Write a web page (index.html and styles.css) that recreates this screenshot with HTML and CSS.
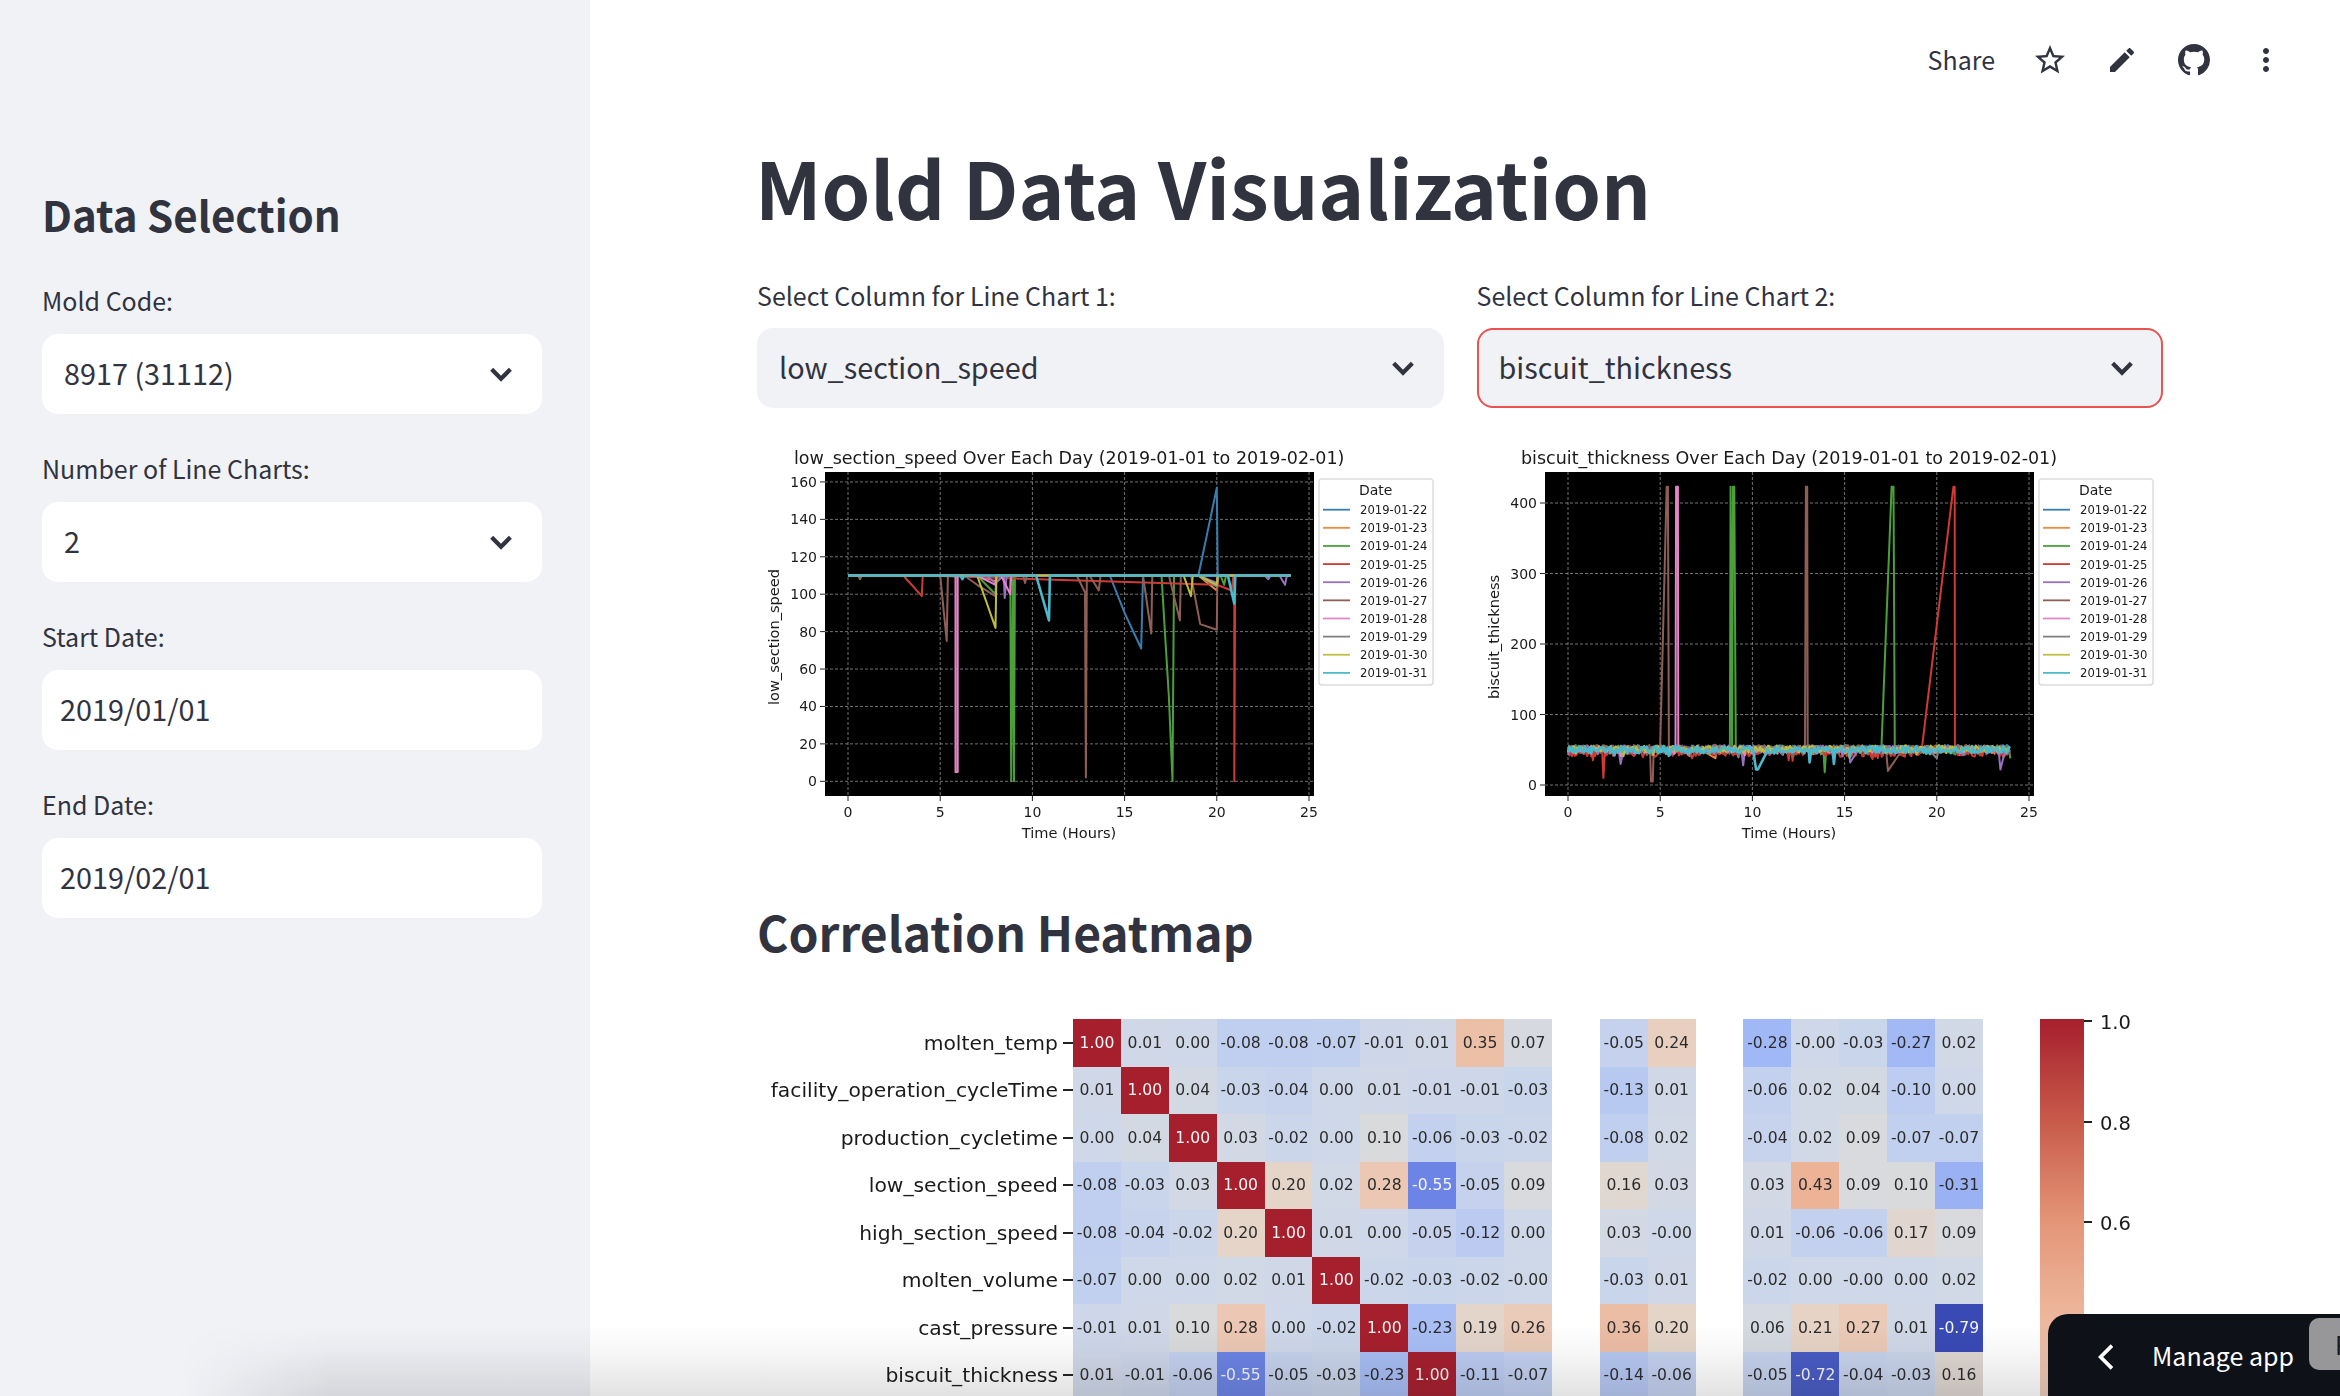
FILE: index.html
```html
<!DOCTYPE html>
<html lang="en">
<head>
<meta charset="utf-8">
<title>Mold Data Visualization</title>
<link rel="stylesheet" href="styles.css">
</head>
<body>
<div class="app">
  <aside class="sidebar">
    <h2 class="side-title">Data Selection</h2>
    <div class="field">
      <label class="label">Mold Code:</label>
      <div class="select white"><span>8917 (31112)</span><svg class="chev" viewBox="0 0 24 24"><path d="M5 8.5l7 7 7-7"/></svg></div>
    </div>
    <div class="field">
      <label class="label">Number of Line Charts:</label>
      <div class="select white"><span>2</span><svg class="chev" viewBox="0 0 24 24"><path d="M5 8.5l7 7 7-7"/></svg></div>
    </div>
    <div class="field">
      <label class="label">Start Date:</label>
      <div class="select white date"><span>2019/01/01</span></div>
    </div>
    <div class="field">
      <label class="label">End Date:</label>
      <div class="select white date"><span>2019/02/01</span></div>
    </div>
  </aside>
  <main class="main">
    <header class="toolbar">
      <span class="share">Share</span>
      <span class="tool"><svg class="ic star" viewBox="0 0 24 24"><path d="M22 9.24l-7.19-.62L12 2 9.19 8.63 2 9.24l5.46 4.73L5.82 21 12 17.27 18.18 21l-1.63-7.03L22 9.24zM12 15.4l-3.76 2.27 1-4.28-3.32-2.88 4.38-.38L12 6.1l1.71 4.04 4.38.38-3.32 2.88 1 4.28L12 15.4z"/></svg></span>
      <span class="tool"><svg class="ic" viewBox="0 0 24 24"><path d="M3 17.25V21h3.75L17.81 9.94l-3.75-3.75L3 17.25zM20.71 7.04c.39-.39.39-1.02 0-1.41l-2.34-2.34c-.39-.39-1.02-.39-1.41 0l-1.83 1.83 3.75 3.75 1.83-1.83z"/></svg></span>
      <span class="tool"><svg class="ic" viewBox="0 0 16 16"><path d="M8 0C3.58 0 0 3.58 0 8c0 3.54 2.29 6.53 5.47 7.59.4.07.55-.17.55-.38 0-.19-.01-.82-.01-1.49-2.01.37-2.53-.49-2.69-.94-.09-.23-.48-.94-.82-1.13-.28-.15-.68-.52-.01-.53.63-.01 1.08.58 1.23.82.72 1.21 1.87.87 2.33.66.07-.52.28-.87.51-1.07-1.78-.2-3.64-.89-3.64-3.95 0-.87.31-1.59.82-2.15-.08-.2-.36-1.02.08-2.12 0 0 .67-.21 2.2.82.64-.18 1.32-.27 2-.27s1.36.09 2 .27c1.53-1.04 2.2-.82 2.2-.82.44 1.1.16 1.92.08 2.12.51.56.82 1.27.82 2.15 0 3.07-1.87 3.75-3.65 3.95.29.25.54.73.54 1.48 0 1.07-.01 1.93-.01 2.2 0 .21.15.46.55.38A8.013 8.013 0 0016 8c0-4.42-3.58-8-8-8z"/></svg></span>
      <span class="tool"><svg class="ic star" viewBox="0 0 24 24"><path d="M12 8c1.1 0 2-.9 2-2s-.9-2-2-2-2 .9-2 2 .9 2 2 2zm0 2c-1.1 0-2 .9-2 2s.9 2 2 2 2-.9 2-2-.9-2-2-2zm0 6c-1.1 0-2 .9-2 2s.9 2 2 2 2-.9 2-2-.9-2-2-2z"/></svg></span>
    </header>
    <h1 class="title">Mold Data Visualization</h1>
    <section class="cols">
      <div class="col">
        <label class="label">Select Column for Line Chart 1:</label>
        <div class="select gray"><span>low_section_speed</span><svg class="chev" viewBox="0 0 24 24"><path d="M5 8.5l7 7 7-7"/></svg></div>
        <div class="chart" id="chart1"></div>
      </div>
      <div class="col">
        <label class="label">Select Column for Line Chart 2:</label>
        <div class="select gray focus"><span>biscuit_thickness</span><svg class="chev" viewBox="0 0 24 24"><path d="M5 8.5l7 7 7-7"/></svg></div>
        <div class="chart" id="chart2"></div>
      </div>
    </section>
    <h2 class="heading">Correlation Heatmap</h2>
    <section class="heatmap">
      <div class="hm-grid" id="hm"></div>
      <div class="colorbar">
        <div class="cb-bar"></div>
        <div class="cb-ticks">
          <div class="cb-tick"><span>1.0</span></div>
          <div class="cb-tick"><span>0.8</span></div>
          <div class="cb-tick"><span>0.6</span></div>
        </div>
      </div>
    </section>
  </main>
</div>
<div class="fade"></div>
<div class="manage">
  <svg class="manage-chev" viewBox="0 0 24 24"><path d="M15.5 4l-8 8 8 8"/></svg>
  <span class="manage-text">Manage app</span>
  <span class="manage-btn">R</span>
</div>
<script src="app.js"></script>
</body>
</html>
```
FILE: styles.css
```css
* { box-sizing: border-box; }
html, body { margin: 0; height: 1396px; overflow: hidden; background: #fff; }
body { font-family: "Noto Sans CJK SC", "Source Sans Pro", sans-serif; color: #31333f; position: relative; }
.app { display: flex; height: 1396px; overflow: hidden; }

.sidebar { width: 590px; flex: none; background: #f0f2f6; padding: 184px 48px 0 42px; }
.side-title { margin: 0 0 38px; font-size: 42px; line-height: 60px; font-weight: 700; }
.field { margin-bottom: 32px; height: 136px; }
.label { display: block; font-size: 25px; line-height: 36px; height: 36px; margin-bottom: 16px; }
.select { display: flex; align-items: center; justify-content: space-between; height: 80px; border-radius: 16px; padding: 0 22px; font-size: 28.8px; }
.select span { padding-bottom: 3px; }
.white { background: #fff; }
.gray { background: #f0f2f6; }
.date { padding-left: 18px; }
.focus { border: 2px solid #e9524f; padding: 0 20px; }
.chev { width: 32px; height: 32px; fill: none; stroke: #31333f; stroke-width: 3.2; margin-right: 3px; }

.main { flex: 1; padding: 0 177px 0 167px; min-width: 0; }
.toolbar { display: flex; justify-content: flex-end; align-items: center; height: 120px; margin-right: -139px; }
.share { font-size: 25px; line-height: 34px; margin: 0 19px 2px 0; }
.tool { width: 72px; display: flex; justify-content: center; align-items: center; }
.ic { width: 32px; height: 32px; fill: #31333f; }
.ic.star { width: 36px; height: 36px; }
.title { margin: 11px 0 0 -2px; font-size: 78px; line-height: 110px; font-weight: 700; height: 110px; }

.cols { display: flex; gap: 33px; margin-top: 36px; }
.col { flex: 1; min-width: 0; }
.col .label { height: 40px; line-height: 37px; margin-bottom: 11px; }
.chart { margin-top: 32px; height: 410px; }
.chart svg { display: block; filter: blur(.45px); }
.chart text { font-family: "DejaVu Sans", sans-serif; fill: #1a1a1a; }
.t-title { font-size: 17.5px; }
.t-tick { font-size: 14px; }
.t-axis { font-size: 14.6px; }
.t-leg { font-size: 11.6px; }
.t-legh { font-size: 14px; }
.grid { stroke: #9a9a9a; stroke-width: 1; stroke-dasharray: 3 2; opacity: .75; }
.tk { stroke: #222; stroke-width: 1; }
.leg-box { fill: #fff; stroke: #ddd; stroke-width: 1.5; }
.ser { fill: none; stroke-width: 2; stroke-linejoin: round; }
.ser:last-of-type { stroke-width: 2.6; }

.heading { margin: 43px 0 0; font-size: 48px; line-height: 76px; height: 76px; font-weight: 700; }
.heatmap { display: flex; margin-top: 50px; align-items: flex-start; filter: blur(.45px); }
.hm-grid { display: grid; grid-template-columns: 316px repeat(19, 47.9px); grid-auto-rows: 47.5px; flex: none; }
.hm-label { font-family: "DejaVu Sans", sans-serif; font-size: 20.3px; color: #1a1a1a; display: flex; align-items: center; justify-content: flex-end; gap: 4px; white-space: nowrap; }
.hm-label::after { content: ""; width: 10px; height: 2px; background: #222; margin-left: 1px; }
.cell { font-family: "DejaVu Sans", sans-serif; font-size: 15.6px; color: #2b2b2b; display: flex; align-items: center; justify-content: center; white-space: nowrap; overflow: visible; }
.cell.inv { color: #f5f5f5; }
.colorbar { display: flex; margin-left: 57px; flex: none; }
.cb-bar { width: 44px; height: 901px; background: linear-gradient(to bottom, #a61f2d 0%, #c85a4a 11.2%, #e49578 22.4%, #ecb498 32%, #ecc8b4 40.2%, #e5d5c9 44.7%, #d9dadc 50.3%, #cfd8e8 55.9%, #c0cff0 60.3%, #a0b8f5 71.5%, #6b84e5 86.6%, #3a4ab5 100%); }
.cb-ticks { display: flex; flex-direction: column; padding-top: 1px; }
.cb-tick { height: 100.7px; display: flex; align-items: flex-start; font-family: "DejaVu Sans", sans-serif; font-size: 19.5px; color: #1a1a1a; line-height: 24px; }
.cb-tick::before { content: ""; width: 8px; height: 2px; background: #222; margin-right: 8px; }
.cb-tick span { margin-top: -9px; }

.fade { position: absolute; left: 180px; right: 0; bottom: 0; height: 72px; background: linear-gradient(to top, rgba(30,30,40,.13), rgba(30,30,40,.03) 65%, rgba(30,30,40,0)); -webkit-mask-image: linear-gradient(to right, transparent, #000 150px); mask-image: linear-gradient(to right, transparent, #000 150px); pointer-events: none; }
.manage { position: absolute; left: 2048px; right: 0; bottom: 0; height: 82px; background: #0e1117; border-top-left-radius: 20px; color: #fff; overflow: hidden; }
.manage-chev { position: absolute; left: 42px; top: 26px; width: 34px; height: 34px; fill: none; stroke: #fff; stroke-width: 2.6; }
.manage-text { position: absolute; left: 104px; top: 23px; font-size: 25px; line-height: 36px; white-space: nowrap; }
.manage-btn { position: absolute; left: 261px; top: 4px; width: 80px; height: 52px; border-radius: 10px; background: #97979a; color: #1b1b1f; font-size: 25px; line-height: 52px; padding-left: 26px; }
```
FILE: app.js
```js
var COLORS = ['#377eb0', '#f08a3c', '#4ca03c', '#d03a34', '#9a70c0', '#8f5f55', '#e584c8', '#808080', '#bfbf3f', '#4cb8cc'];
var DATES = ['2019-01-22','2019-01-23','2019-01-24','2019-01-25','2019-01-26','2019-01-27','2019-01-28','2019-01-29','2019-01-30','2019-01-31'];
var OX = 757, OY = 440;

function axes(o) {
  var s = '';
  var L = o.left - OX, R = L + 489, T = 472 - OY, B = 796 - OY;
  var xp = function (h) { return (848 + (o.left - 825) + h * 18.44) - OX; };
  var yp = function (v) { return (o.y0 - OY) - v * o.k; };
  s += '<text class="t-title" x="' + (L + o.titleX) + '" y="' + (464 - OY) + '">' + o.name + ' Over Each Day (2019-01-01 to 2019-02-01)</text>';
  s += '<rect x="' + L + '" y="' + T + '" width="489" height="' + (B - T) + '" fill="#000"/>';
  [0, 5, 10, 15, 20, 25].forEach(function (h) {
    var x = xp(h);
    s += '<line class="grid" x1="' + x + '" x2="' + x + '" y1="' + T + '" y2="' + B + '"/>';
    s += '<line class="tk" x1="' + x + '" x2="' + x + '" y1="' + B + '" y2="' + (B + 5) + '"/>';
    s += '<text class="t-tick" text-anchor="middle" x="' + x + '" y="' + (B + 21) + '">' + h + '</text>';
  });
  o.yt.forEach(function (v) {
    var y = yp(v);
    s += '<line class="grid" x1="' + L + '" x2="' + R + '" y1="' + y + '" y2="' + y + '"/>';
    s += '<line class="tk" x1="' + (L - 5) + '" x2="' + L + '" y1="' + y + '" y2="' + y + '"/>';
    s += '<text class="t-tick" text-anchor="end" x="' + (L - 8) + '" y="' + (y + 5) + '">' + v + '</text>';
  });
  o.series.forEach(function (pts, i) {
    var p = pts.map(function (q) { return xp(q[0]).toFixed(1) + ',' + yp(q[1]).toFixed(1); }).join(' ');
    s += '<polyline class="ser" stroke="' + COLORS[i] + '" points="' + p + '"/>';
  });
  var xc = L + 244, yc = (B + T) / 2 + 3;
  s += '<text class="t-axis" text-anchor="middle" x="' + xc + '" y="' + (B + 42) + '">Time (Hours)</text>';
  s += '<text class="t-axis" text-anchor="middle" transform="translate(' + (L - 46) + ',' + yc + ') rotate(-90)">' + o.name + '</text>';
  var lx = R + 5;
  s += '<rect class="leg-box" x="' + lx + '" y="' + (479 - OY) + '" width="114" height="206" rx="3"/>';
  s += '<text class="t-legh" x="' + (lx + 40) + '" y="' + (495 - OY) + '">Date</text>';
  DATES.forEach(function (d, i) {
    var y = 509.7 + i * 18.13 - OY;
    s += '<line stroke="' + COLORS[i] + '" stroke-width="1.8" x1="' + (lx + 4) + '" x2="' + (lx + 31) + '" y1="' + y + '" y2="' + y + '"/>';
    s += '<text class="t-leg" x="' + (lx + 41) + '" y="' + (y + 4.5) + '">' + d + '</text>';
  });
  return '<svg width="686" height="410" viewBox="0 0 686 410">' + s + '</svg>';
}

function base(segs, lv) {
  lv = lv || 110;
  var out = [[0, lv]];
  segs.forEach(function (g) { g.forEach(function (p) { out.push(p); }); });
  out.push([24, lv]);
  return out;
}

var s1 = [
  base([[[14.2,110],[15,90],[15.9,71],[16,110]], [[19,110],[20,157],[20.05,110]]]),
  base([[[7,110],[8,107],[8.05,110]], [[19,110],[20,102],[20.1,110]]]),
  base([[[7,110],[8,100],[8.05,110]], [[8.8,110],[8.85,0],[8.95,110],[9,0],[9.05,110]], [[17,110],[17.4,45],[17.6,0],[17.68,110]], [[20.2,110],[20.4,105],[20.5,110]]]),
  base([[[3,110],[4,99],[4.05,110]], [[20,105],[20.8,102],[20.9,110],[20.95,110],[20.95,0],[21,110]]]),
  base([[[7.5,110],[8,106]], [[8.45,110],[8.5,98],[8.6,110]], [[19,110],[20,106],[20.05,110]], [[22.6,110],[22.8,108],[22.9,110]], [[23.4,110],[23.7,105],[23.8,110]]]),
  base([[[0.55,110],[0.65,108],[0.75,110]], [[5,110],[5.35,75],[5.42,110]], [[6.3,110],[7,105],[8,99],[8.05,110]], [[9.5,110],[9.6,106],[9.7,110]], [[12.4,110],[12.85,101],[12.9,2],[12.95,110]], [[13.1,110],[13.6,102],[13.7,110]], [[16,110],[16.45,79],[16.5,110]], [[17.4,110],[18,86],[18.05,110]], [[18.6,110],[19.1,84],[20,81],[20.03,110]]]),
  base([[[5.83,110],[5.83,5],[5.95,5],[5.95,110]], [[7,110],[8,105],[8.05,110]], [[8.3,110],[8.8,100],[8.85,110]]]),
  base([[[19,110],[20,104],[20.05,110]]]),
  base([[[7,110],[8,82],[8.05,110]], [[18.2,110],[18.6,99],[18.7,110]], [[19,110],[20,105],[20.05,110]]]),
  base([[[6.1,110],[6.2,108],[6.3,110]], [[10.2,110],[10.9,86],[10.95,110]], [[20.6,110],[20.95,95],[21,110]]])
];

function band(seed, lo, hi, dips) {
  var r = seed, out = [];
  function rnd() { r = (r * 9301 + 49297) % 233280; return r / 233280; }
  var evs = dips.slice();
  var h = 0, i = 0;
  evs.sort(function (a, b) { return a[0] - b[0]; });
  while (h < 24) {
    while (i < evs.length && evs[i][0] <= h) { evs[i].slice(1).forEach(function (p) { out.push(p); }); h = Math.max(h, out[out.length - 1][0] + .03); i++; }
    var v = lo + rnd() * (hi - lo);
    if (rnd() < .05) v -= rnd() * 9;
    out.push([h, v]);
    h += .07;
  }
  return out;
}
var s2 = [
  band(11, 48, 57, []),
  band(23, 44, 55, [[7.4, [7.4, 47], [8, 38], [8.05, 50]]]),
  band(37, 44, 56, [[8.78, [8.78, 50], [8.82, 423], [8.9, 50], [8.95, 423], [9.02, 423], [9.1, 50]], [13.85, [13.85, 50], [13.92, 18], [14, 50]], [17, [17, 55], [17.55, 423], [17.65, 423], [17.72, 50]]]),
  band(41, 40, 52, [[1.85, [1.85, 50], [1.92, 10], [2, 48]], [1.3, [1.3, 48], [1.35, 35], [1.45, 48]], [19.2, [19.2, 53], [20.9, 423], [20.97, 423], [20.98, 50]]]),
  band(53, 46, 56, [[2.75, [2.75, 50], [2.85, 30], [3, 48]], [9.4, [9.4, 50], [9.5, 28], [9.6, 50]], [15.25, [15.25, 50], [15.3, 32], [15.7, 48]], [23.35, [23.35, 50], [23.45, 22], [23.7, 48]]]),
  band(67, 46, 57, [[4.45, [4.45, 50], [4.5, 5], [4.6, 5], [4.65, 50]], [5, [5, 55], [5.35, 423], [5.42, 423], [5.47, 50]], [12.85, [12.85, 50], [12.9, 423], [12.97, 423], [13, 50]], [17.25, [17.25, 50], [17.35, 20], [18, 45]]]),
  band(79, 46, 54, [[5.83, [5.83, 50], [5.86, 423], [5.96, 423], [5.98, 50]]]),
  band(83, 47, 56, [[19.5, [19.5, 52], [20, 38], [20.1, 50]]]),
  band(97, 46, 56, []),
  band(101, 45, 55, [[10.05, [10.05, 48], [10.2, 22], [10.3, 22], [10.8, 48]], [14.35, [14.35, 50], [14.42, 30], [14.5, 50]], [13.05, [13.05, 50], [13.1, 32], [13.2, 50]]])
];

document.getElementById('chart1').innerHTML = axes({ left: 825, name: 'low_section_speed', titleX: -31, y0: 781.3, k: 1.871, yt: [0,20,40,60,80,100,120,140,160], series: s1 });
document.getElementById('chart2').innerHTML = axes({ left: 825, name: 'biscuit_thickness', titleX: -24, y0: 785, k: .705, yt: [0,100,200,300,400], series: s2 });

var stops = [[0,[58,74,181]],[.134,[107,132,229]],[.285,[160,184,245]],[.397,[192,207,240]],[.441,[207,216,232]],[.497,[217,218,220]],[.553,[229,213,201]],[.598,[236,200,180]],[.68,[236,180,152]],[.776,[228,149,120]],[.888,[200,90,74]],[1,[166,31,45]]];
function col(v) {
  var t = (v + .79) / 1.79;
  for (var i = 1; i < stops.length; i++) {
    if (t <= stops[i][0]) {
      var a = stops[i - 1], b = stops[i], f = (t - a[0]) / (b[0] - a[0]);
      return 'rgb(' + a[1].map(function (c, k) { return Math.round(c + (b[1][k] - c) * f); }).join(',') + ')';
    }
  }
  return 'rgb(166,31,45)';
}
var rows = [
  ['molten_temp', '1.00 0.01 0.00 -0.08 -0.08 -0.07 -0.01 0.01 0.35 0.07 x -0.05 0.24 x -0.28 -0.00 -0.03 -0.27 0.02'],
  ['facility_operation_cycleTime', '0.01 1.00 0.04 -0.03 -0.04 0.00 0.01 -0.01 -0.01 -0.03 x -0.13 0.01 x -0.06 0.02 0.04 -0.10 0.00'],
  ['production_cycletime', '0.00 0.04 1.00 0.03 -0.02 0.00 0.10 -0.06 -0.03 -0.02 x -0.08 0.02 x -0.04 0.02 0.09 -0.07 -0.07'],
  ['low_section_speed', '-0.08 -0.03 0.03 1.00 0.20 0.02 0.28 -0.55 -0.05 0.09 x 0.16 0.03 x 0.03 0.43 0.09 0.10 -0.31'],
  ['high_section_speed', '-0.08 -0.04 -0.02 0.20 1.00 0.01 0.00 -0.05 -0.12 0.00 x 0.03 -0.00 x 0.01 -0.06 -0.06 0.17 0.09'],
  ['molten_volume', '-0.07 0.00 0.00 0.02 0.01 1.00 -0.02 -0.03 -0.02 -0.00 x -0.03 0.01 x -0.02 0.00 -0.00 0.00 0.02'],
  ['cast_pressure', '-0.01 0.01 0.10 0.28 0.00 -0.02 1.00 -0.23 0.19 0.26 x 0.36 0.20 x 0.06 0.21 0.27 0.01 -0.79'],
  ['biscuit_thickness', '0.01 -0.01 -0.06 -0.55 -0.05 -0.03 -0.23 1.00 -0.11 -0.07 x -0.14 -0.06 x -0.05 -0.72 -0.04 -0.03 0.16']
];
var h = '';
rows.forEach(function (r) {
  h += '<div class="hm-label">' + r[0] + '</div>';
  r[1].split(' ').forEach(function (v) {
    if (v === 'x') { h += '<div></div>'; return; }
    var n = parseFloat(v), inv = n > .9 || n < -.5;
    h += '<div class="cell' + (inv ? ' inv' : '') + '" style="background:' + col(n) + '">' + v + '</div>';
  });
});
document.getElementById('hm').innerHTML = h;
```
